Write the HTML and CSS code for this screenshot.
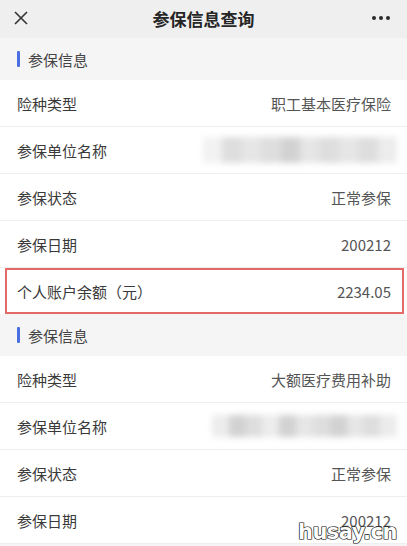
FILE: index.html
```html
<!DOCTYPE html>
<html lang="zh">
<head>
<meta charset="utf-8">
<link rel="stylesheet" href="styles.css">
</head>
<body>
<div class="page">
  <header class="topbar">
    <svg class="close" width="16" height="16" viewBox="0 0 16 16"><path d="M2 2L14 14M14 2L2 14" stroke="#333" stroke-width="1.6" fill="none"/></svg>
    <div class="title">参保信息查询</div>
    <div class="more"><span></span><span></span><span></span></div>
  </header>

  <div class="section-head"><span class="bar"></span>参保信息</div>
  <div class="row"><span class="label">险种类型</span><span class="value">职工基本医疗保险</span></div>
  <div class="row"><span class="label">参保单位名称</span>
    <div class="blur blur1">
      <i class="g0"></i><i class="g2"></i><i class="g3"></i><i class="g2"></i><i class="g4"></i><i class="g3"></i><i class="g2"></i><i class="g3"></i><i class="g2"></i><i class="g1"></i>
    </div>
  </div>
  <div class="row"><span class="label">参保状态</span><span class="value">正常参保</span></div>
  <div class="row"><span class="label">参保日期</span><span class="value">200212</span></div>
  <div class="hl-wrap">
    <div class="row hl"><span class="label">个人账户余额（元）</span><span class="value">2234.05</span></div>
  </div>

  <div class="section-head second"><span class="bar"></span>参保信息</div>
  <div class="row"><span class="label">险种类型</span><span class="value">大额医疗费用补助</span></div>
  <div class="row"><span class="label">参保单位名称</span>
    <div class="blur blur2">
      <i class="g1"></i><i class="g4"></i><i class="g2"></i><i class="g1"></i><i class="g4"></i><i class="g3"></i><i class="g2"></i><i class="g4"></i><i class="g3"></i><i class="g2"></i><i class="g1"></i>
    </div>
  </div>
  <div class="row"><span class="label">参保状态</span><span class="value">正常参保</span></div>
  <div class="row"><span class="label">参保日期</span><span class="value">200212</span></div>

  <div class="watermark">husay.cn</div>
</div>
</body>
</html>
```

FILE: styles.css
```css
html, body {
  margin: 0;
  padding: 0;
}
body {
  width: 407px;
  height: 546px;
  overflow: hidden;
  background: #f5f5f5;
  font-family: "Noto Sans CJK SC", "Noto Sans", sans-serif;
}
.page {
  position: relative;
  height: 546px;
  overflow: hidden;
}
.topbar {
  height: 38px;
  background: #efefef;
  display: flex;
  align-items: center;
  padding: 0 15px 2px 13px;
  box-sizing: border-box;
}
.close {
  display: block;
}
.title {
  flex: 1;
  text-align: center;
  font-size: 17px;
  font-weight: 700;
  color: #262626;
  padding-left: 6px;
}
.more {
  display: flex;
  gap: 3px;
  padding-right: 2px;
}
.more span {
  width: 4px;
  height: 4px;
  border-radius: 50%;
  background: #2a2a2a;
}
.section-head {
  height: 42px;
  display: flex;
  align-items: center;
  padding-left: 17px;
  font-size: 15px;
  color: #444;
  background: #f5f5f5;
}
.bar {
  width: 3px;
  height: 16px;
  background: #4a6fe0;
  margin-right: 8px;
  border-radius: 1px;
}
.row {
  height: 46px;
  border-bottom: 1px solid #eeeeee;
  background: #fff;
  display: flex;
  align-items: center;
  justify-content: space-between;
  padding: 0 16px 0 17px;
  font-size: 15px;
}
.label {
  color: #3a3a3a;
}
.value {
  color: #555;
}
.hl-wrap {
  background: #fff;
  padding: 0 3px 0 5px;
}
.row.hl {
  height: 42px;
  border: 2px solid #e46a6a;
  padding: 0 11px 0 10px;
}
.blur {
  display: flex;
  filter: blur(3px);
  margin-right: -6px;
}
.blur1 {
  width: 194px;
  height: 26px;
}
.blur2 {
  width: 185px;
  height: 22px;
}
.blur i {
  flex: 1;
  display: block;
}
.g0 { background: #f2f2f2; }
.g1 { background: #ececec; }
.g2 { background: #dedede; }
.g3 { background: #e6e6e6; }
.g4 { background: #d2d2d2; }
.watermark {
  position: absolute;
  right: 10px;
  bottom: 2px;
  font-family: "DejaVu Sans", sans-serif;
  font-weight: 700;
  font-size: 21px;
  color: #fff;
  letter-spacing: -0.5px;
  -webkit-text-stroke: 1.2px #222;
  paint-order: stroke fill;
  text-shadow: 0 0 1px #000;
}
```
